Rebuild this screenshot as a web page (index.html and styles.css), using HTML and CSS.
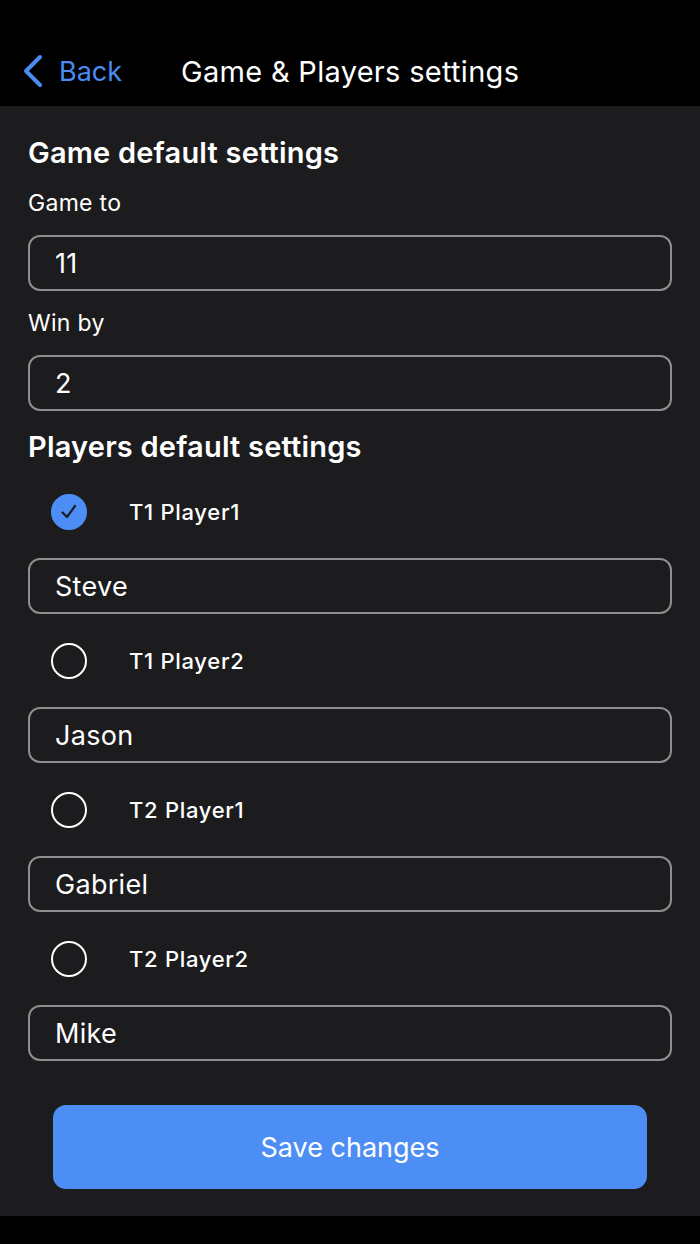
FILE: index.html
```html
<!DOCTYPE html>
<html lang="en">
<head>
    <meta charset="UTF-8">
    <meta name="viewport" content="width=device-width, initial-scale=1.0">
    <title>Game &amp; Players settings</title>
    <link rel="stylesheet" href="styles.css">
</head>
<body>

    <header class="topbar">
        <a class="back" href="#">
            <svg class="back-icon" width="22" height="34" viewBox="0 0 22 34">
                <path d="M18 3 L4 17 L18 31" fill="none" stroke="#4a8cf2" stroke-width="4" stroke-linecap="round" stroke-linejoin="round"/>
            </svg>
            <span>Back</span>
        </a>
        <h1 class="title">Game &amp; Players settings</h1>
    </header>

    <main class="page">
        <section class="group">
            <h2>Game default settings</h2>
            <label class="label">Game to</label>
            <div class="field">11</div>
            <label class="label">Win by</label>
            <div class="field">2</div>
        </section>

        <section class="group players">
            <h2>Players default settings</h2>

            <div class="radio-row">
                <span class="radio checked">
                    <svg width="24" height="24" viewBox="0 0 24 24">
                        <path d="M5.5 12.5 L10 17 L18 6" fill="none" stroke="#1c1c1e" stroke-width="2.2" stroke-linecap="round" stroke-linejoin="round"/>
                    </svg>
                </span>
                <span class="radio-text">T1 Player1</span>
            </div>
            <div class="field">Steve</div>

            <div class="radio-row">
                <span class="radio"></span>
                <span class="radio-text">T1 Player2</span>
            </div>
            <div class="field">Jason</div>

            <div class="radio-row">
                <span class="radio"></span>
                <span class="radio-text">T2 Player1</span>
            </div>
            <div class="field">Gabriel</div>

            <div class="radio-row">
                <span class="radio"></span>
                <span class="radio-text">T2 Player2</span>
            </div>
            <div class="field">Mike</div>
        </section>

        <button class="save">Save changes</button>
    </main>

</body>
</html>
```

FILE: styles.css
```css
body {
    font-family: Inter, "Liberation Sans", sans-serif;
    margin: 0;
    padding: 0;
    background-color: #000;
    color: #fff;
    height: 1244px;
    overflow: hidden;
}

.topbar {
    height: 106px;
    box-sizing: border-box;
    padding: 36px 0 0 22px;
    display: flex;
    align-items: center;
    background-color: #000;
}

.back {
    display: flex;
    align-items: center;
    color: #4a8cf2;
    text-decoration: none;
    font-size: 27px;
    width: 159px;
}

.back-icon {
    margin-right: 15px;
}

.title {
    margin: 0;
    font-size: 29px;
    font-weight: 400;
    letter-spacing: 0.3px;
}

.page {
    background-color: #1c1c1e;
    padding: 29px 28px 27px;
    display: flex;
    flex-direction: column;
}

.group {
    display: flex;
    flex-direction: column;
    gap: 17px;
}

.group h2 {
    margin: 0;
    font-size: 29px;
    font-weight: 600;
    line-height: 36px;
    letter-spacing: 0.2px;
}

.players {
    margin-top: 18px;
    gap: 18px;
}

.label {
    font-size: 23px;
    line-height: 30px;
    letter-spacing: 0.3px;
}

.field {
    height: 56px;
    box-sizing: border-box;
    border: 2px solid #8e8e90;
    border-radius: 12px;
    padding: 0 25px;
    display: flex;
    align-items: center;
    font-size: 27px;
    letter-spacing: 0.3px;
}

.radio-row {
    height: 57px;
    display: flex;
    align-items: center;
    padding-left: 23px;
}

.radio {
    width: 36px;
    height: 36px;
    box-sizing: border-box;
    border: 2px solid #fff;
    border-radius: 50%;
    display: flex;
    align-items: center;
    justify-content: center;
    margin-right: 42px;
}

.radio.checked {
    background-color: #4d8ef5;
    border-color: #4d8ef5;
}

.radio-text {
    font-size: 22px;
    font-weight: 450;
    letter-spacing: 0.7px;
}

.save {
    margin: 44px 25px 0;
    height: 84px;
    border: none;
    border-radius: 13px;
    background-color: #4d8ef5;
    color: #fff;
    font-family: Inter, "Liberation Sans", sans-serif;
    font-size: 27px;
    font-weight: 400;
}
```
